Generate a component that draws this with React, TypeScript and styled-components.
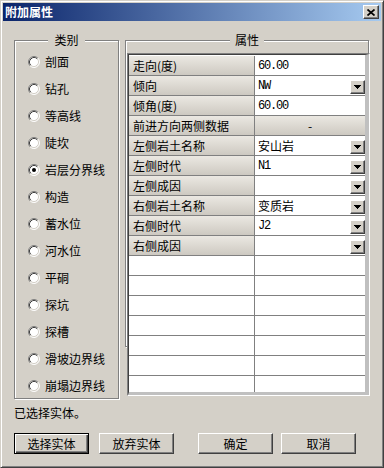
import React from 'react'
import styled, { createGlobalStyle } from 'styled-components'

interface PropRow {
  label: string,
  value?: string,
  combo?: boolean,
  section?: boolean
}

const categories = [
  '剖面', '钻孔', '等高线', '陡坎', '岩层分界线', '构造', '蓄水位',
  '河水位', '平硐', '探坑', '探槽', '滑坡边界线', '崩塌边界线'
]

const rows: PropRow[] = [
  { label: '走向(度)', value: '60.00' },
  { label: '倾向', value: 'NW', combo: true },
  { label: '倾角(度)', value: '60.00' },
  { label: '前进方向两侧数据', value: '-', section: true },
  { label: '左侧岩土名称', value: '安山岩', combo: true },
  { label: '左侧时代', value: 'N1', combo: true },
  { label: '左侧成因', value: '', combo: true },
  { label: '右侧岩土名称', value: '变质岩', combo: true },
  { label: '右侧时代', value: 'J2', combo: true },
  { label: '右侧成因', value: '', combo: true },
]

const EMPTY_ROWS = 7

const GlobalStyle = createGlobalStyle`
  html, body {
    margin: 0;
    padding: 0;
    background: #d4d0c8;
  }
  body {
    font-family: "Noto Sans CJK SC", "Noto Sans", sans-serif;
    font-size: 12px;
    color: #000;
  }
`

const Window = styled.div`
  width: 384px;
  height: 468px;
  box-sizing: border-box;
  border: 1px solid;
  border-color: #d4d0c8 #404040 #404040 #d4d0c8;
  box-shadow: inset 1px 1px #fff, inset -1px -1px #808080;
  padding: 2px;
  background: #d4d0c8;
  display: flex;
  flex-direction: column;
`

const TitleBar = styled.div`
  height: 18px;
  display: flex;
  align-items: center;
  justify-content: space-between;
  padding: 0 2px;
  background: linear-gradient(to right, #0a246a, #a6caf0);
`

const Title = styled.span`
  color: #fff;
  font-weight: bold;
  font-size: 12px;
  line-height: 14px;
`

const CloseButton = styled.div`
  width: 16px;
  height: 14px;
  box-sizing: border-box;
  background: #d4d0c8;
  border: 1px solid;
  border-color: #fff #404040 #404040 #fff;
  box-shadow: inset -1px -1px #808080;
  display: flex;
  align-items: center;
  justify-content: center;
`

const Body = styled.div`
  padding: 19px 11px 0 11px;
  display: flex;
  flex-direction: column;
`

const Main = styled.div`
  display: flex;
  gap: 6px;
  align-items: flex-start;
`

const GroupBox = styled.div<{ $w: number, $h: number }>`
  width: ${p => p.$w}px;
  height: ${p => p.$h}px;
  box-sizing: border-box;
  border: 1px solid #808080;
  box-shadow: inset 1px 1px #fff, 1px 1px #fff;
  display: flex;
  flex-direction: column;
`

const Legend = styled.div<{ $pad: number }>`
  align-self: center;
  height: 14px;
  line-height: 14px;
  margin: -8px 0 -6px;
  padding: 0 ${p => p.$pad}px;
  background: #d4d0c8;
`

const RadioList = styled.div`
  display: flex;
  flex-direction: column;
  padding: 7px 0 0 13px;
`

const RadioItem = styled.label`
  height: 27px;
  display: flex;
  align-items: center;
  gap: 5px;
  line-height: 14px;
`

const RightPane = styled.div`
  display: grid;
  align-items: start;

  & > * {
    grid-area: 1 / 1;
  }
`

const TableFrame = styled.div`
  margin: 13px 0 0 2px;
  width: 243px;
  height: 343px;
  box-sizing: border-box;
  border: 1px solid;
  border-color: #808080 #fff #fff #808080;
  position: relative;
`

const TableInner = styled.div`
  height: 100%;
  box-sizing: border-box;
  border-style: solid;
  border-width: 1px 4px 3px 1px;
  border-color: #404040 #c0c0c0 #c0c0c0 #404040;
  background: #fff;
  padding-top: 1px;
  overflow: hidden;
`

const Row = styled.div`
  height: 20px;
  box-sizing: border-box;
  border-bottom: 1px solid #808080;
  display: flex;
`

const LabelCell = styled.div<{ $blank?: boolean }>`
  width: 126px;
  flex: none;
  box-sizing: border-box;
  border-right: 1px solid #808080;
  padding-left: 4px;
  display: flex;
  align-items: center;
  line-height: 14px;
  white-space: nowrap;
  background: ${p => p.$blank ? '#fff' : 'linear-gradient(to bottom, #ebe8e2, #cdc9c1)'};
`

const ValueCell = styled.div<{ $gray?: boolean }>`
  flex: 1;
  display: flex;
  align-items: center;
  justify-content: ${p => p.$gray ? 'center' : 'space-between'};
  padding-left: ${p => p.$gray ? 0 : 3}px;
  background: ${p => p.$gray ? 'linear-gradient(to bottom, #ebe8e2, #cdc9c1)' : '#fff'};
  line-height: 14px;
`

const ValueText = styled.span<{ $latin?: boolean }>`
  white-space: nowrap;
  ${p => p.$latin ? `
    font-family: "Liberation Mono", monospace;
    font-size: 12px;
    letter-spacing: -1.2px;
  ` : ''}
`

const DropButton = styled.div`
  width: 15px;
  height: 14px;
  align-self: flex-end;
  margin-bottom: 1px;
  box-sizing: border-box;
  background: #d4d0c8;
  border: 1px solid;
  border-color: #fff #404040 #404040 #fff;
  box-shadow: inset -1px -1px #808080;
  display: flex;
  align-items: center;
  justify-content: center;
`

const Status = styled.div`
  margin-top: 7px;
  line-height: 14px;
`

const Footer = styled.div`
  display: flex;
  margin-top: 13px;
`

const ButtonGroup = styled.div<{ $gap: number, $offset?: number }>`
  display: flex;
  gap: ${p => p.$gap}px;
  margin-left: ${p => p.$offset || 0}px;
`

const Button = styled.button<{ $default?: boolean }>`
  width: 75px;
  height: 21px;
  box-sizing: border-box;
  padding: 0;
  font: inherit;
  font-size: 12px;
  line-height: 14px;
  color: #000;
  background: #d4d0c8;
  border: 1px solid;
  border-color: ${p => p.$default ? '#000' : '#fff #404040 #404040 #fff'};
  box-shadow: ${p => p.$default
    ? 'inset 1px 1px #fff, inset -1px -1px #404040, inset -2px -2px #808080'
    : 'inset -1px -1px #808080'};
`

const Radio: React.FC<{ checked?: boolean }> = ({ checked }) => (
  <svg width='12' height='12' viewBox='0 0 12 12'>
    <circle cx='6' cy='6' r='5' fill='#fff' />
    <path d='M2.11 9.89 A5.5 5.5 0 0 1 9.89 2.11' stroke='#808080' fill='none' />
    <path d='M9.89 2.11 A5.5 5.5 0 0 1 2.11 9.89' stroke='#fff' fill='none' />
    <path d='M2.82 9.18 A4.5 4.5 0 0 1 9.18 2.82' stroke='#404040' fill='none' />
    <path d='M9.18 2.82 A4.5 4.5 0 0 1 2.82 9.18' stroke='#d4d0c8' fill='none' />
    {checked && <circle cx='6' cy='6' r='2' fill='#000' />}
  </svg>
)

const Arrow = () => (
  <svg width='7' height='4' viewBox='0 0 7 4' shapeRendering='crispEdges'>
    <polygon points='0,0 7,0 3.5,4' fill='#000' />
  </svg>
)

const CloseGlyph = () => (
  <svg width='8' height='7' viewBox='0 0 8 7'>
    <path d='M0.5 0.5 L7.5 6.5 M7.5 0.5 L0.5 6.5' stroke='#000' strokeWidth='1.7' />
  </svg>
)

const isLatin = (s: string) => /^[\x00-\x7f]+$/.test(s)

const App: React.FC = () => {
  return (
    <>
      <GlobalStyle />
      <Window>
        <TitleBar>
          <Title>附加属性</Title>
          <CloseButton><CloseGlyph /></CloseButton>
        </TitleBar>
        <Body>
          <Main>
            <GroupBox $w={106} $h={359}>
              <Legend $pad={6}>类别</Legend>
              <RadioList>
                {categories.map(c => (
                  <RadioItem key={c}>
                    <Radio checked={c === '岩层分界线'} />
                    {c}
                  </RadioItem>
                ))}
              </RadioList>
            </GroupBox>

            <RightPane>
              <GroupBox $w={244} $h={307}>
                <Legend $pad={5}>属性</Legend>
              </GroupBox>
              <TableFrame>
                <TableInner>
                  {rows.map(r => (
                    <Row key={r.label}>
                      <LabelCell>{r.label}</LabelCell>
                      <ValueCell $gray={r.section}>
                        <ValueText $latin={!!r.value && isLatin(r.value) && !r.section}>
                          {r.value}
                        </ValueText>
                        {r.combo && <DropButton><Arrow /></DropButton>}
                      </ValueCell>
                    </Row>
                  ))}
                  {Array.from({ length: EMPTY_ROWS }).map((_, i) => (
                    <Row key={`empty-${i}`}>
                      <LabelCell $blank />
                      <ValueCell />
                    </Row>
                  ))}
                </TableInner>
              </TableFrame>
            </RightPane>
          </Main>

          <Status>已选择实体。</Status>

          <Footer>
            <ButtonGroup $gap={10}>
              <Button $default>选择实体</Button>
              <Button>放弃实体</Button>
            </ButtonGroup>
            <ButtonGroup $gap={8} $offset={24}>
              <Button>确定</Button>
              <Button>取消</Button>
            </ButtonGroup>
          </Footer>
        </Body>
      </Window>
    </>
  )
}

export default App
